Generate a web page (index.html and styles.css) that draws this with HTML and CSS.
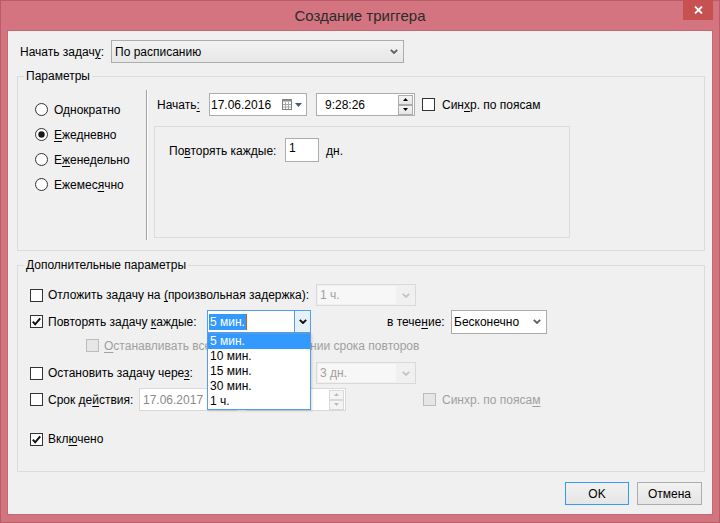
FILE: index.html
```html
<!DOCTYPE html>
<html lang="ru">
<head>
<meta charset="utf-8">
<title>Создание триггера</title>
<link rel="stylesheet" href="styles.css">
</head>
<body>
<div class="window">
  <div class="titlebar">
    <div class="title">Создание триггера</div>
    <div class="close"><svg width="9" height="8" viewBox="0 0 9 8"><path d="M1 0.5L8 7.5M8 0.5L1 7.5" stroke="#fff" stroke-width="1.8"/></svg></div>
  </div>
  <div class="client">
    <div class="toprow">
      <span class="toplabel">Начать задач<u>у</u>:</span>
      <div class="select select-main"><span>По расписанию</span><svg class="chev" viewBox="0 0 8 5"><path d="M0.8 0.8L4 4L7.2 0.8" fill="none" stroke="#5f5f5f" stroke-width="1.8"/></svg></div>
    </div>

    <div class="group g1">
      <span class="legend">Параметры</span>
      <div class="g1-body">
        <div class="radios">
          <div class="radio-row"><svg class="radio" viewBox="0 0 13 13"><circle cx="6.5" cy="6.5" r="6" fill="#fff" stroke="#333"/></svg><span>Однократно</span></div>
          <div class="radio-row"><svg class="radio" viewBox="0 0 13 13"><circle cx="6.5" cy="6.5" r="6" fill="#fff" stroke="#333"/><circle cx="6.5" cy="6.5" r="3.2" fill="#1a1a1a"/></svg><span><u>Е</u>жедневно</span></div>
          <div class="radio-row"><svg class="radio" viewBox="0 0 13 13"><circle cx="6.5" cy="6.5" r="6" fill="#fff" stroke="#333"/></svg><span>Е<u>ж</u>енедельно</span></div>
          <div class="radio-row"><svg class="radio" viewBox="0 0 13 13"><circle cx="6.5" cy="6.5" r="6" fill="#fff" stroke="#333"/></svg><span>Ежемес<u>я</u>чно</span></div>
        </div>
        <div class="sep"></div>
        <div class="g1-right">
          <div class="start-row">
            <span class="start-label">Начать<u>:</u></span>
            <div class="field date">
              <span>17.06.2016</span>
              <span class="cal">
                <svg width="10" height="11" viewBox="0 0 10 11"><rect x="0.5" y="0.5" width="9" height="10" fill="#fff" stroke="#7d7d7d"/><rect x="0.5" y="0.5" width="9" height="2" fill="#8a8a8a"/><path d="M3.5 3v7M6.5 3v7M1 5.5h8M1 8h8" stroke="#a6a6a6"/></svg>
                <svg width="7" height="4" viewBox="0 0 7 4"><path d="M0 0h7L3.5 4z" fill="#4a5a72"/></svg>
              </span>
            </div>
            <div class="field time">
              <span>9:28:26</span>
              <span class="spin">
                <span class="spin-btn"><svg width="5" height="3" viewBox="0 0 5 3"><path d="M0 3h5L2.5 0z" fill="#000"/></svg></span>
                <span class="spin-btn"><svg width="5" height="3" viewBox="0 0 5 3"><path d="M0 0h5L2.5 3z" fill="#000"/></svg></span>
              </span>
            </div>
            <span class="chk chk-sync"></span>
            <span>Син<u>х</u>р. по поясам</span>
          </div>
          <div class="inner">
            <span class="inner-label">По<u>в</u>торять каждые:</span>
            <div class="field num">1</div>
            <span class="unit">дн.</span>
          </div>
        </div>
      </div>
    </div>

    <div class="group g2">
      <span class="legend">Дополнительные параметры</span>
      <div class="g2-body">
        <div class="row row-a">
          <span class="chk"></span>
          <span class="lbl-wide">Отложить задачу на <u>(</u>произвольная задержка):</span>
          <div class="dsel"><span class="dsel-text">1 ч.</span><span class="dsel-arrow"><svg class="chev" viewBox="0 0 8 5"><path d="M0.8 0.8L4 4L7.2 0.8" fill="none" stroke="#c4c4c4" stroke-width="1.8"/></svg></span></div>
        </div>
        <div class="row row-b">
          <span class="chk"><svg width="11" height="11" viewBox="0 0 11 11"><path d="M1.8 5.6L4.2 8.3L9.2 2.4" fill="none" stroke="#111" stroke-width="2"/></svg></span>
          <span class="lbl-repeat">Повторять задачу <u>к</u>аждые:</span>
          <div class="combo">
            <div class="combo-box">
              <span class="combo-input"><span class="seltext">5 мин.</span><span class="caret"></span></span>
              <span class="combo-btn"><svg class="chev" viewBox="0 0 8 5"><path d="M0.8 0.8L4 4L7.2 0.8" fill="none" stroke="#111" stroke-width="1.9"/></svg></span>
            </div>
            <div class="dropdown">
              <div class="opt hl">5 мин.</div>
              <div class="opt">10 мин.</div>
              <div class="opt">15 мин.</div>
              <div class="opt">30 мин.</div>
              <div class="opt">1 ч.</div>
            </div>
          </div>
          <span class="lbl-during">в тече<u>н</u>ие:</span>
          <div class="select select-dur"><span>Бесконечно</span><svg class="chev" viewBox="0 0 8 5"><path d="M0.8 0.8L4 4L7.2 0.8" fill="none" stroke="#5f5f5f" stroke-width="1.8"/></svg></div>
        </div>
        <div class="row row-c">
          <span class="chk disabled"></span>
          <span class="dis"><u>О</u>станавливать все задачи по истечении срока повторов</span>
        </div>
        <div class="row row-d">
          <span class="chk"></span>
          <span class="lbl-wide">Остановить задачу чере<u>з</u>:</span>
          <div class="dsel"><span class="dsel-text">3 дн.</span><span class="dsel-arrow"><svg class="chev" viewBox="0 0 8 5"><path d="M0.8 0.8L4 4L7.2 0.8" fill="none" stroke="#c4c4c4" stroke-width="1.8"/></svg></span></div>
        </div>
        <div class="row row-e">
          <span class="chk"></span>
          <span class="lbl-exp">Срок де<u>й</u>ствия:</span>
          <div class="field dfield date2"><span>17.06.2017</span></div>
          <div class="field dfield time2">
            <span>9:28:26</span>
            <span class="spin">
              <span class="spin-btn dis-btn"><svg width="5" height="3" viewBox="0 0 5 3"><path d="M0 3h5L2.5 0z" fill="#bcbcbc"/></svg></span>
              <span class="spin-btn dis-btn"><svg width="5" height="3" viewBox="0 0 5 3"><path d="M0 0h5L2.5 3z" fill="#bcbcbc"/></svg></span>
            </span>
          </div>
          <span class="chk disabled chk-sync2"></span>
          <span class="dis">Синхр. по пояса<u>м</u></span>
        </div>
        <div class="row row-f">
          <span class="chk"><svg width="11" height="11" viewBox="0 0 11 11"><path d="M1.8 5.6L4.2 8.3L9.2 2.4" fill="none" stroke="#111" stroke-width="2"/></svg></span>
          <span>Вкл<u>ю</u>чено</span>
        </div>
      </div>
    </div>

    <div class="buttons">
      <div class="btn btn-ok">OK</div>
      <div class="btn btn-cancel">Отмена</div>
    </div>
  </div>
</div>
</body>
</html>
```

FILE: styles.css
```css
* { box-sizing: border-box; }
html, body { margin: 0; padding: 0; }
body {
  width: 720px; height: 523px; overflow: hidden;
  background: #d37480;
  font-family: "Liberation Sans", Arial, sans-serif;
  font-size: 12px; line-height: 16px; color: #000;
}
u { text-decoration: underline; text-underline-offset: 2px; }

.window {
  width: 720px; height: 523px;
  background: #d37480;
  border: 1px solid #bb5d69;
  display: flex; flex-direction: column;
}
.titlebar {
  height: 29px; flex: none;
  display: grid; grid-template-columns: 1fr auto 1fr; align-items: start;
}
.title { grid-column: 2; font-size: 15px; line-height: 29px; color: #2b2b2b; }
.close {
  grid-column: 3; justify-self: end; margin-right: 6px;
  width: 30px; height: 20px; margin-top: -1px;
  background: #c75050;
  display: flex; align-items: center; justify-content: center;
}

.client {
  margin: 0 6px; height: 485px; flex: none;
  background: #f0f0f0;
  border: 1px solid #bf6975;
  padding: 9px 7px 0 9px;
  display: flex; flex-direction: column;
}
.client > * { flex: none; }

.toprow { display: flex; align-items: center; height: 23px; }
.toplabel { width: 94px; padding-left: 3px; }

.select {
  display: flex; align-items: center; justify-content: space-between;
  border: 1px solid #acacac;
  background: linear-gradient(#f2f2f2, #e7e7e7);
  padding: 0 5px 0 3px; height: 23px; flex: none;
}
.select-main { width: 293px; }
.chev { width: 8px; height: 5px; display: block; }

.group { border: 1px solid #dcdcdc; }
.legend {
  display: block; width: fit-content; height: 16px;
  margin: -9px 0 0 6px; padding: 0 2px;
  background: #f0f0f0; line-height: 16px;
}
.g1 { margin-top: 13px; }
.g2 { margin-top: 14px; }

.g1-body { display: flex; height: 166px; }
.radios { width: 128px; padding: 13px 0 0 17px; display: flex; flex-direction: column; flex: none; }
.radio-row { height: 25px; display: flex; align-items: center; gap: 6px; }
.radio { width: 13px; height: 13px; flex: none; }
.sep { width: 2px; flex: none; border-left: 1px solid #a0a0a0; border-right: 1px solid #fff; margin: 6px 0 10px; }
.g1-right { padding-top: 9px; display: flex; flex-direction: column; }

.start-row { display: flex; align-items: center; height: 23px; padding-left: 9px; }
.start-label { width: 52px; }
.field {
  height: 23px; border: 1px solid #abadb3; background: #fff;
  display: flex; align-items: center; padding: 0 1px; flex: none;
}
.date { width: 98px; justify-content: space-between; padding-right: 4px; }
.cal { display: flex; align-items: center; gap: 3px; }
.time { width: 99px; margin-left: 9px; justify-content: space-between; padding-left: 8px; }
.spin { display: flex; flex-direction: column; justify-content: center; }
.spin-btn {
  width: 15px; height: 10px;
  border: 1px solid #acacac;
  background: linear-gradient(#f4f4f4, #e6e6e6);
  display: flex; align-items: center; justify-content: center;
}
.dis-btn { border-color: #d9d9d9; background: #f4f4f4; }

.chk {
  width: 13px; height: 13px; flex: none;
  border: 1px solid #333; background: #fff;
  display: flex; align-items: center; justify-content: center;
  margin-right: 5px;
}
.chk.disabled { border-color: #bcbcbc; background: #e6e6e6; }
.chk-sync { margin-left: 7px; margin-right: 7px; }

.inner {
  margin: 10px 0 0 6px; width: 416px; height: 112px;
  border: 1px solid #dcdcdc;
  padding: 11px 0 0 14px;
  display: flex; align-items: flex-start;
}
.inner-label { width: 116px; line-height: 24px; padding-top: 1px; }
.num { width: 34px; height: 24px; align-items: flex-start; padding: 1px 3px; }
.unit { margin-left: 7px; line-height: 24px; padding-top: 1px; }

.g2-body { padding: 11px 0 21px 12px; display: flex; flex-direction: column; }
.row { display: flex; align-items: center; height: 22px; flex: none; }
.row-b { height: 23px; margin-top: 4px; }
.row-c { height: 19px; margin-top: 3px; padding-left: 56px; }
.row-d { margin-top: 7px; }
.row-e { height: 23px; margin-top: 4px; }
.row-f { margin-top: 17px; }

.lbl-wide { width: 268px; flex: none; }
.lbl-repeat { width: 159px; flex: none; }
.lbl-exp { width: 91px; flex: none; }
.lbl-during { margin-left: 76px; width: 64px; flex: none; }
.dis { color: #a0a0a0; }

.dsel {
  width: 100px; height: 22px; flex: none;
  border: 1px solid #d9d9d9; background: #f0f0f0;
  display: flex; align-items: stretch;
}
.dsel-text { flex: 1; background: #f7f7f7; color: #a0a0a0; padding-left: 2px; display: flex; align-items: center; margin: 1px 0 1px 1px; }
.dsel-arrow { width: 19px; display: flex; align-items: center; justify-content: center; }

.combo { position: relative; width: 104px; height: 23px; flex: none; }
.combo-box { display: flex; height: 100%; border: 1px solid #569de5; background: #fff; }
.combo-input { flex: 1; display: flex; align-items: center; padding-left: 1px; }
.seltext { background: #3399ff; color: #fff; line-height: 16px; padding: 0 1px; }
.caret { width: 1px; height: 16px; background: #c0601a; }
.combo-btn { width: 16px; border-left: 1px solid #569de5; background: #e5f1fb; display: flex; align-items: center; justify-content: center; }
.dropdown {
  position: absolute; left: 0; top: 100%; width: 104px;
  border: 1px solid #569de5; background: #fff; z-index: 5;
  box-shadow: 1px 1px 2px rgba(0,0,0,0.15);
}
.opt { height: 15px; line-height: 15px; padding-left: 2px; }
.opt.hl { background: #3399ff; color: #fff; }

.select-dur { width: 96px; height: 24px; background: #fff; border-color: #acacac; padding-left: 2px; }

.dfield { border-color: #d9d9d9; color: #8a8a8a; }
.date2 { width: 98px; padding-left: 3px; }
.time2 { width: 100px; margin-left: 9px; justify-content: space-between; padding-left: 8px; }
.chk-sync2 { margin-left: 77px; margin-right: 6px; }

.buttons { display: flex; justify-content: flex-end; gap: 8px; margin-top: 10px; padding-right: 3px; }
.btn {
  height: 23px; display: flex; align-items: center; justify-content: center;
  border: 1px solid #acacac; background: linear-gradient(#f2f2f2, #e5e5e5);
}
.btn-ok { width: 64px; border-color: #3399ff; }
.btn-cancel { width: 65px; }
```
